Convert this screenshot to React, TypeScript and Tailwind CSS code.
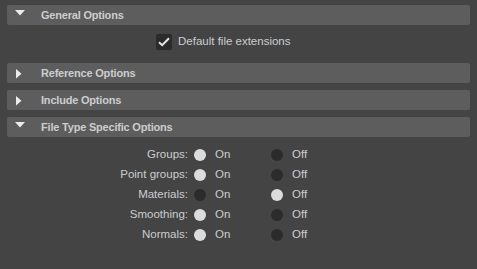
import React from "react";

const rows = [
  { label: "Groups:", on: true },
  { label: "Point groups:", on: true },
  { label: "Materials:", on: false },
  { label: "Smoothing:", on: true },
  { label: "Normals:", on: true },
];

const Header = ({ title, open }: { title: string; open: boolean }) => (
  <div className="relative flex h-[20px] items-center rounded-[2px] bg-[#5d5d5d] pl-[34px]">
    {open ? (
      <svg className="absolute left-[8px] top-[5px]" width="10" height="6" viewBox="0 0 10 6">
        <path d="M0 0H10L5 5.5Z" fill="#ececec" />
      </svg>
    ) : (
      <svg className="absolute left-[9px] top-[6px]" width="6" height="10" viewBox="0 0 6 10">
        <path d="M0 0V9.5L5.5 4.75Z" fill="#ececec" />
      </svg>
    )}
    <span className="text-[11px] font-bold tracking-[-0.2px] text-[#cbcdd0]">{title}</span>
  </div>
);

const Radio = ({ checked }: { checked: boolean }) => (
  <span
    className={
      "inline-block h-[12px] w-[12px] rounded-full " +
      (checked ? "bg-[#dcdcdc]" : "bg-[#2b2b2b]")
    }
  />
);

export default function App() {
  return (
    <div
      className="flex h-[269px] w-[477px] flex-col bg-[#444444] px-[7px] pt-[5px]"
      style={{ fontFamily: '"Liberation Sans", Arial, sans-serif' }}
    >
      <Header title="General Options" open />
      {/* checkbox row */}
      <div className="flex h-[38px] items-center pl-[149px] pb-[6px] pt-[2px]">
        <span className="flex h-[16px] w-[16px] items-center justify-center rounded-[2px] bg-[#2b2b2b]">
          <svg width="12" height="10" viewBox="0 0 12 10">
            <path d="M1 5.2L4.2 8.2L11 1.2" stroke="#e6e6e6" strokeWidth="2" fill="none" />
          </svg>
        </span>
        <span className="ml-[6px] text-[11.5px] text-[#cbcdd0]">Default file extensions</span>
      </div>
      <div className="flex flex-col gap-[7px]">
        <Header title="Reference Options" open={false} />
        <Header title="Include Options" open={false} />
        <Header title="File Type Specific Options" open />
      </div>
      <div className="mt-[8px] flex flex-col">
        {rows.map((r) => (
          <div key={r.label} className="flex h-[20px] items-center text-[11.5px] text-[#cbcdd0]">
            <span className="w-[181px] text-right">{r.label}</span>
            <span className="ml-[6px] flex w-[77px] items-center">
              <Radio checked={r.on} />
              <span className="ml-[9px]">On</span>
            </span>
            <span className="flex items-center">
              <Radio checked={!r.on} />
              <span className="ml-[9px]">Off</span>
            </span>
          </div>
        ))}
      </div>
    </div>
  );
}
